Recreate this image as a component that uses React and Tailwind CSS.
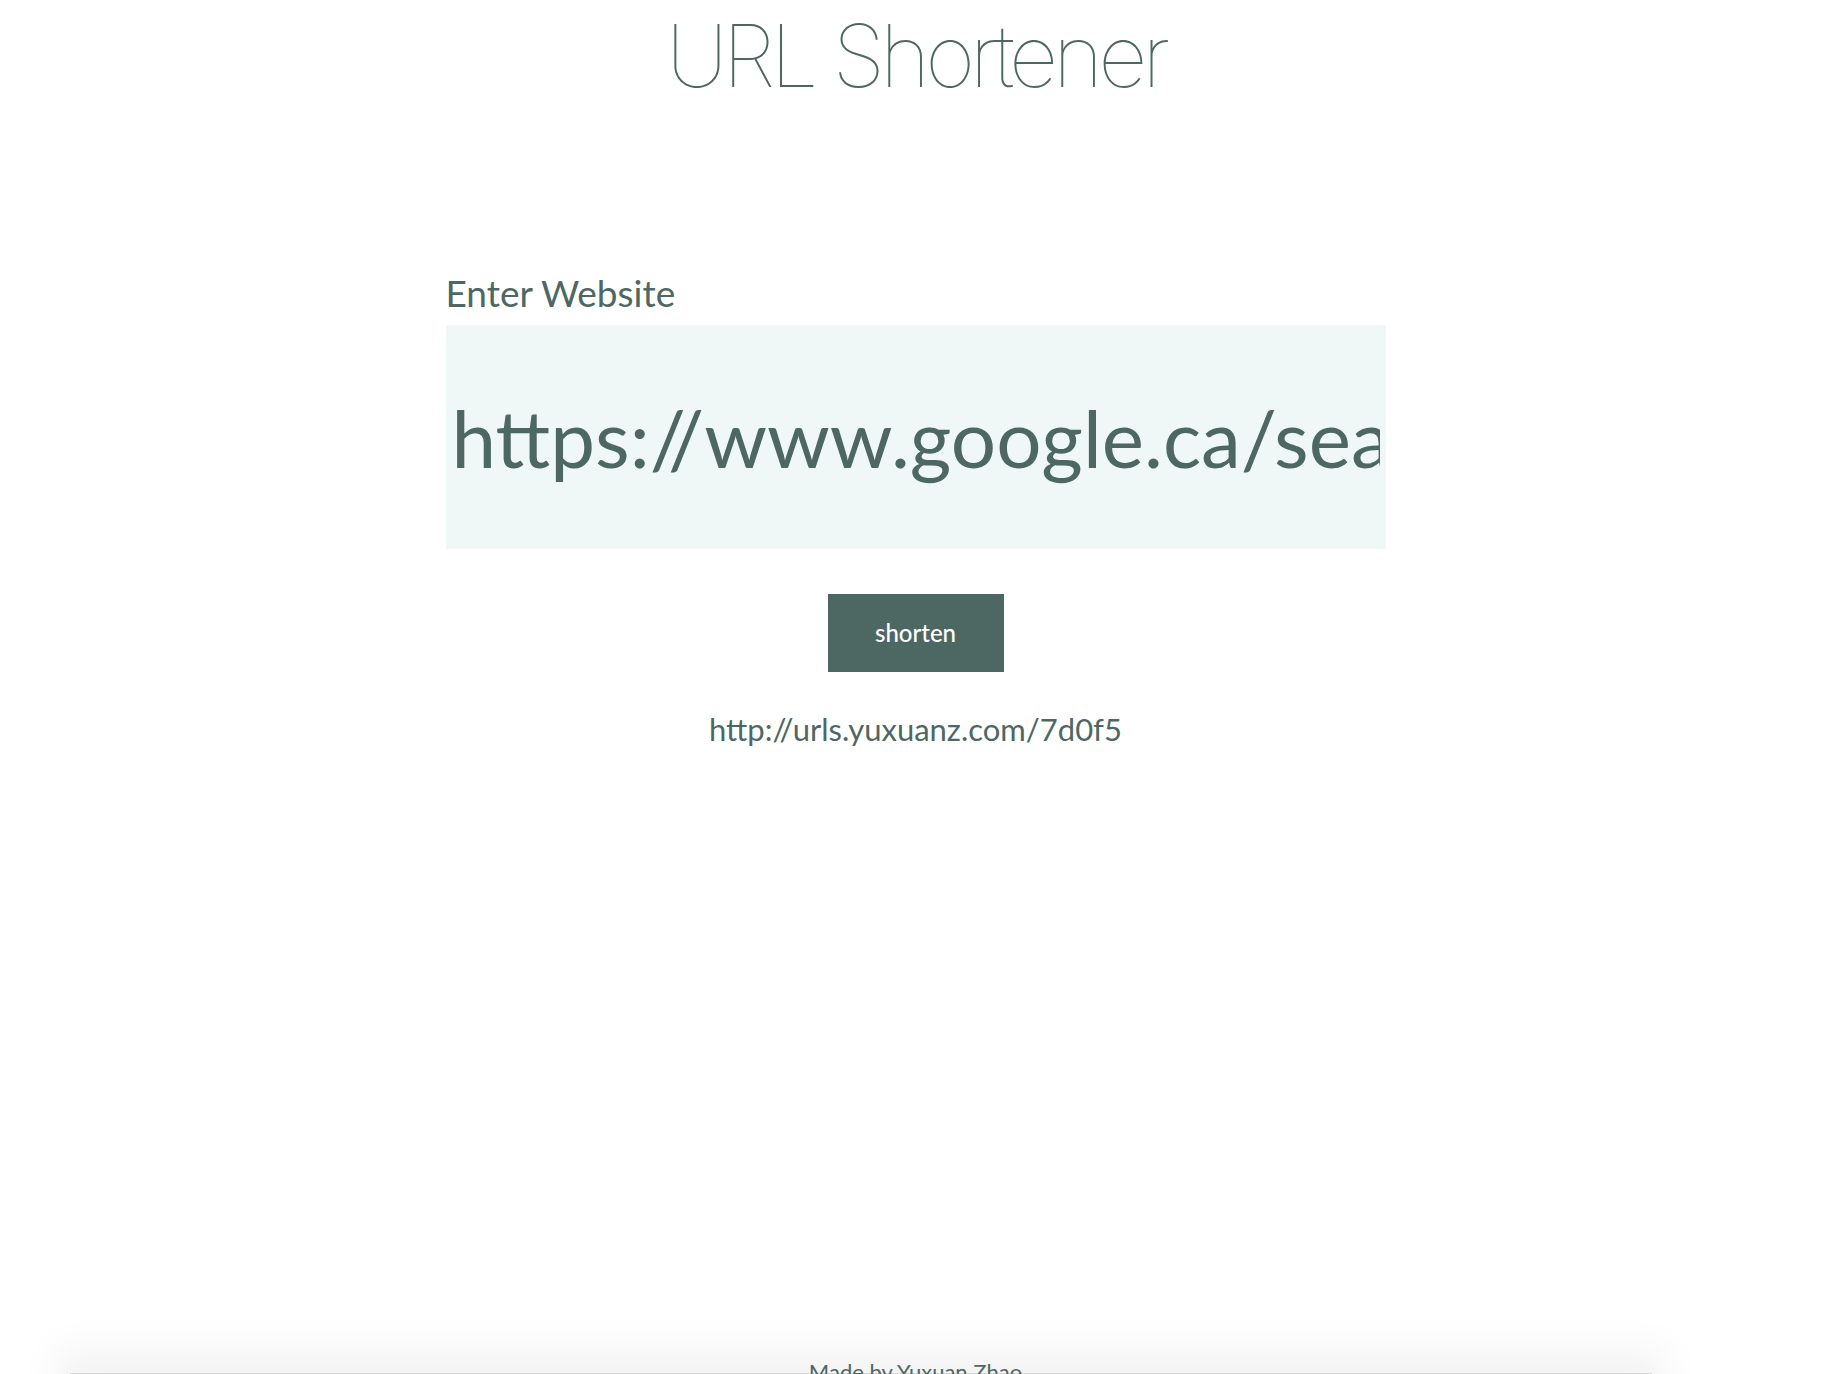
import React, { useState } from 'react';

const App = () => {
  const [url, setUrl] = useState('https://www.google.ca/search?q=url+shortener');
  const [short] = useState('http://urls.yuxuanz.com/7d0f5');

  return (
    <div className="bg-white text-[#4d6863] font-['Lato','Noto_Sans',sans-serif]">
      <div className="min-h-[1373px] flex flex-col">
        <h1 className="text-center text-[86px] leading-none font-thin tracking-[-0.06em] pt-[13px] font-['Inter','Lato',sans-serif]">
          URL Shortener
        </h1>

        <div className="w-[940px] mx-auto mt-[175px]">
          <label className="block text-[37px] leading-none mb-[14px]">Enter Website</label>
          <input
            type="text"
            value={url}
            onChange={(e) => setUrl(e.target.value)}
            className="w-full h-[224px] bg-[#f0f8f7] px-[6px] text-[80px] text-[#4d6863] outline-none border-0"
          />
        </div>

        <div className="flex justify-center mt-[45px]">
          <button className="w-[176px] h-[78px] bg-[#4d6863] text-white text-[24px] font-medium">
            shorten
          </button>
        </div>

        <p className="text-center text-[31px] mt-[34px]">{short}</p>
      </div>

      {/* footer */}
      <div className="relative">
        <div className="ml-[70px] mr-[179px] h-[60px] border-t border-[#d6d6d6] bg-[#f3f3f3] shadow-[0_-10px_40px_14px_rgba(0,0,0,0.05)]"></div>
        <p className="absolute inset-x-0 top-[-12px] text-center text-[22px] leading-none">Made by Yuxuan Zhao</p>
      </div>
    </div>
  );
};

export default App;
